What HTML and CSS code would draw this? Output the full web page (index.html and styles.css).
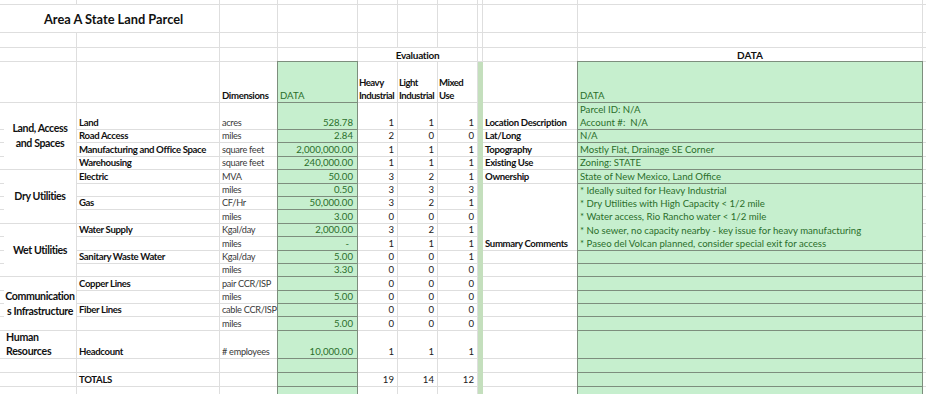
FILE: index.html
```html
<!DOCTYPE html>
<html>
<head>
<meta charset="utf-8">
<link rel="stylesheet" href="styles.css">
</head>
<body>
<div class="sheet">
<!-- row 0 -->
<div class="c z"></div><div class="c"></div><div class="c"></div><div class="c"></div><div class="c"></div><div class="c"></div><div class="c"></div><div class="c"></div><div class="c"></div><div class="c"></div><div class="c"></div><div class="c"></div>
<!-- row 1 -->
<div class="c z"></div><div class="c t">Area A State Land Parcel</div><div class="c"></div><div class="c"></div><div class="c"></div><div class="c"></div><div class="c"></div><div class="c"></div><div class="c"></div><div class="c"></div><div class="c"></div>
<!-- row 2 -->
<div class="c z"></div><div class="c"></div><div class="c"></div><div class="c"></div><div class="c"></div><div class="c"></div><div class="c"></div><div class="c"></div><div class="c"></div><div class="c"></div><div class="c"></div><div class="c"></div>
<!-- row 3 -->
<div class="c z"></div><div class="c"></div><div class="c"></div><div class="c"></div><div class="c"></div><div class="c ev">Evaluation</div><div class="c"></div><div class="c"></div><div class="c hd">DATA</div><div class="c"></div>
<!-- row 4 -->
<div class="c z"></div><div class="c"></div><div class="c"></div><div class="c b">Dimensions</div><div class="c g">DATA</div><div class="c b wr">Heavy<br>Industrial</div><div class="c b wr">Light<br>Industrial</div><div class="c b wr">Mixed<br>Use</div><div class="c s"></div><div class="c"></div><div class="c g">DATA</div><div class="c"></div>
<!-- row 5 -->
<div class="c z"></div><div class="c grp">Land, Access and Spaces</div><div class="c b">Land</div><div class="c u">acres</div><div class="c g n">528.78</div><div class="c n">1</div><div class="c n">1</div><div class="c n">1</div><div class="c s"></div><div class="c b">Location Description</div><div class="c g two">Parcel ID: N/A<br>Account #:&nbsp; N/A</div><div class="c"></div>
<!-- row 6 -->
<div class="c z"></div><div class="c b">Road Access</div><div class="c u">miles</div><div class="c g n">2.84</div><div class="c n">2</div><div class="c n">0</div><div class="c n">0</div><div class="c s"></div><div class="c b">Lat/Long</div><div class="c g">N/A</div><div class="c"></div>
<!-- row 7 -->
<div class="c z"></div><div class="c b">Manufacturing and Office Space</div><div class="c u">square feet</div><div class="c g n">2,000,000.00</div><div class="c n">1</div><div class="c n">1</div><div class="c n">1</div><div class="c s"></div><div class="c b">Topography</div><div class="c g">Mostly Flat, Drainage SE Corner</div><div class="c"></div>
<!-- row 8 -->
<div class="c z"></div><div class="c b">Warehousing</div><div class="c u">square feet</div><div class="c g n">240,000.00</div><div class="c n">1</div><div class="c n">1</div><div class="c n">1</div><div class="c s"></div><div class="c b">Existing Use</div><div class="c g">Zoning: STATE</div><div class="c"></div>
<!-- row 9 -->
<div class="c z"></div><div class="c grp">Dry Utilities</div><div class="c b">Electric</div><div class="c u">MVA</div><div class="c g n">50.00</div><div class="c n">3</div><div class="c n">2</div><div class="c n">1</div><div class="c s"></div><div class="c b">Ownership</div><div class="c g">State of New Mexico, Land Office</div><div class="c"></div>
<!-- row 10 -->
<div class="c z"></div><div class="c"></div><div class="c u">miles</div><div class="c g n">0.50</div><div class="c n">3</div><div class="c n">3</div><div class="c n">3</div><div class="c s"></div><div class="c b sum">Summary Comments</div><div class="c g cm"><div>* Ideally suited for Heavy Industrial</div><div>* Dry Utilities with High Capacity &lt; 1/2 mile</div><div>* Water access, Rio Rancho water &lt; 1/2 mile</div><div>* No sewer, no capacity nearby - key issue for heavy manufacturing</div><div>* Paseo del Volcan planned, consider special exit for access</div></div><div class="c"></div>
<!-- row 11 -->
<div class="c z"></div><div class="c b">Gas</div><div class="c u">CF/Hr</div><div class="c g n">50,000.00</div><div class="c n">3</div><div class="c n">2</div><div class="c n">1</div><div class="c s"></div><div class="c"></div>
<!-- row 12 -->
<div class="c z"></div><div class="c"></div><div class="c u">miles</div><div class="c g n">3.00</div><div class="c n">0</div><div class="c n">0</div><div class="c n">0</div><div class="c s"></div><div class="c"></div>
<!-- row 13 -->
<div class="c z"></div><div class="c grp">Wet Utilities</div><div class="c b">Water Supply</div><div class="c u">Kgal/day</div><div class="c g n">2,000.00</div><div class="c n">3</div><div class="c n">2</div><div class="c n">1</div><div class="c s"></div><div class="c"></div>
<!-- row 14 -->
<div class="c z"></div><div class="c"></div><div class="c u">miles</div><div class="c g n dash">-</div><div class="c n">1</div><div class="c n">1</div><div class="c n">1</div><div class="c s"></div><div class="c"></div>
<!-- row 15 -->
<div class="c z"></div><div class="c b">Sanitary Waste Water</div><div class="c u">Kgal/day</div><div class="c g n">5.00</div><div class="c n">0</div><div class="c n">0</div><div class="c n">1</div><div class="c s"></div><div class="c"></div><div class="c g"></div><div class="c"></div>
<!-- row 16 -->
<div class="c z"></div><div class="c"></div><div class="c u">miles</div><div class="c g n">3.30</div><div class="c n">0</div><div class="c n">0</div><div class="c n">0</div><div class="c s"></div><div class="c"></div><div class="c g"></div><div class="c"></div>
<!-- row 17 -->
<div class="c z"></div><div class="c grp">Communication<br>s Infrastructure</div><div class="c b">Copper Lines</div><div class="c u">pair CCR/ISP</div><div class="c g n"></div><div class="c n">0</div><div class="c n">0</div><div class="c n">0</div><div class="c s"></div><div class="c"></div><div class="c g"></div><div class="c"></div>
<!-- row 18 -->
<div class="c z"></div><div class="c"></div><div class="c u">miles</div><div class="c g n">5.00</div><div class="c n">0</div><div class="c n">0</div><div class="c n">0</div><div class="c s"></div><div class="c"></div><div class="c g"></div><div class="c"></div>
<!-- row 19 -->
<div class="c z"></div><div class="c b">Fiber Lines</div><div class="c u">cable CCR/ISP</div><div class="c g n"></div><div class="c n">0</div><div class="c n">0</div><div class="c n">0</div><div class="c s"></div><div class="c"></div><div class="c g"></div><div class="c"></div>
<!-- row 20 -->
<div class="c z"></div><div class="c"></div><div class="c u">miles</div><div class="c g n">5.00</div><div class="c n">0</div><div class="c n">0</div><div class="c n">0</div><div class="c s"></div><div class="c"></div><div class="c g"></div><div class="c"></div>
<!-- row 21 -->
<div class="c z"></div><div class="c hr">Human Resources</div><div class="c b">Headcount</div><div class="c u"># employees</div><div class="c g n">10,000.00</div><div class="c n">1</div><div class="c n">1</div><div class="c n">1</div><div class="c s"></div><div class="c"></div><div class="c g"></div><div class="c"></div>
<!-- row 22 -->
<div class="c z"></div><div class="c"></div><div class="c"></div><div class="c"></div><div class="c g"></div><div class="c"></div><div class="c"></div><div class="c"></div><div class="c s"></div><div class="c"></div><div class="c g"></div><div class="c"></div>
<!-- row 23 -->
<div class="c z"></div><div class="c"></div><div class="c b">TOTALS</div><div class="c"></div><div class="c g"></div><div class="c n">19</div><div class="c n">14</div><div class="c n">12</div><div class="c s"></div><div class="c"></div><div class="c g"></div><div class="c"></div>
<!-- row 24 -->
<div class="c z"></div><div class="c"></div><div class="c"></div><div class="c"></div><div class="c g"></div><div class="c"></div><div class="c"></div><div class="c"></div><div class="c s"></div><div class="c"></div><div class="c g"></div><div class="c"></div>
</div>
</body>
</html>
```

FILE: styles.css
```css
* { box-sizing: border-box; }
html, body { margin: 0; padding: 0; background: #fff; }
body {
  font-family: Lato, "Liberation Sans", sans-serif;
  font-size: 9.6px;
  color: #222;
}
.sheet {
  display: grid;
  grid-template-columns: 4px 73px 143px 58px 80px 40px 40px 40px 5px 95px 345px 3px;
  grid-template-rows: 5px 28px 15px 14px 41px 27px repeat(15, 13.4px) 28px 14px 14px 12px;
  width: 926px;
  height: 394px;
  overflow: hidden;
}
.c {
  border-right: 1px solid #dedede;
  border-bottom: 1px solid #dedede;
  display: flex;
  align-items: flex-end;
  padding: 0 2px 0 2px;
  white-space: nowrap;
  line-height: 12px;
  min-width: 0;
}
.z { border-right: none; }
.b { font-weight: 700; color: #111; letter-spacing: -0.35px; }
.u { color: #3a3a3a; font-size: 9.2px; letter-spacing: -0.3px; }
.n { justify-content: flex-end; padding-right: 3px; }
.g {
  background: #c6efce;
  border: 1px solid #7d8e7d;
  margin: -1px 0 0 -1px;
  color: #2a6e2a;
}
.g.n { padding-right: 4px; }
.g.dash { padding-right: 8px; }
.s {
  background: #c4dfbd;
  border-right: none;
  border-bottom: none;
}
.t {
  grid-column: span 2;
  font-size: 12.8px;
  font-weight: 700;
  color: #111;
  padding-left: 40px;
  align-items: center;
}
.ev {
  grid-column: span 3;
  justify-content: center;
  font-weight: 700;
  font-size: 10px;
  letter-spacing: -0.3px;
  color: #111;
}
.hd {
  justify-content: center;
  font-weight: 700;
  font-size: 10px;
  color: #111;
}
.wr { line-height: 13px; padding-bottom: 0; letter-spacing: -0.5px; padding-left: 1px; }
.two { line-height: 13px; }
.grp {
  grid-row: span 4;
  justify-content: center;
  align-items: center;
  text-align: center;
  white-space: normal;
  font-weight: 700;
  font-size: 10.6px;
  letter-spacing: -0.4px;
  line-height: 15px;
  color: #111;
}
.hr {
  white-space: normal;
  font-weight: 700;
  font-size: 10.6px;
  letter-spacing: -0.3px;
  line-height: 14px;
  color: #111;
  padding-left: 2px;
}
.sum { grid-row: span 5; }
.cm {
  grid-row: span 5;
  flex-direction: column;
  align-items: flex-start;
  justify-content: flex-start;
  line-height: 13.4px;
}
```
